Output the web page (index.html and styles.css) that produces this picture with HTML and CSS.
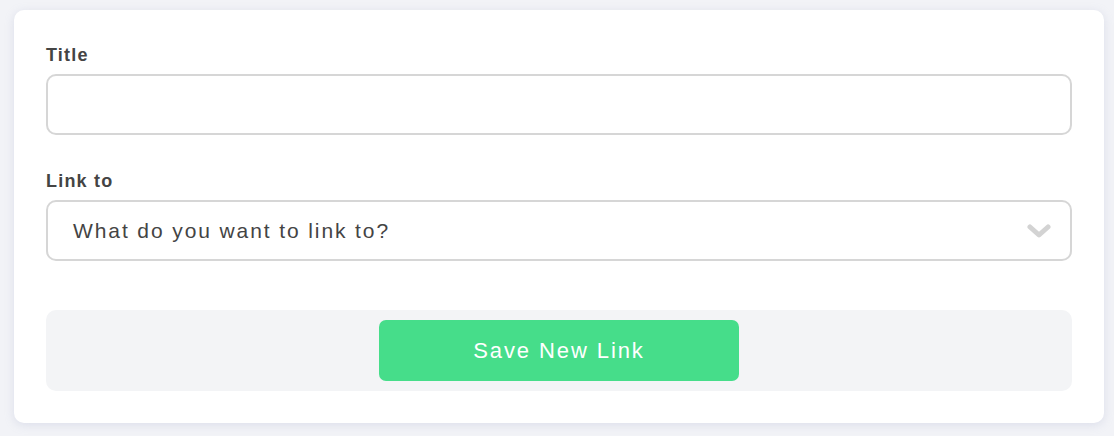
FILE: index.html
```html
<!DOCTYPE html>
<html lang="en">
<head>
<meta charset="utf-8">
<title>New Link</title>
<link rel="stylesheet" href="styles.css">
</head>
<body>
<div class="page">
  <form class="card">
    <div class="group">
      <label class="label" for="title">Title</label>
      <input class="field" id="title" type="text">
    </div>
    <div class="group">
      <label class="label" for="link">Link to</label>
      <div class="select">
        <span class="select-text">What do you want to link to?</span>
        <svg class="chevron" width="24" height="16" viewBox="0 0 24 16" aria-hidden="true">
          <path d="M3 4 L12 12 L21 4" fill="none" stroke="#d3d3d3" stroke-width="5" stroke-linecap="round" stroke-linejoin="round"/>
        </svg>
      </div>
    </div>
    <div class="footer">
      <button class="btn" type="button">Save New Link</button>
    </div>
  </form>
</div>
</body>
</html>
```
FILE: styles.css
```css
* { box-sizing: border-box; }
html, body { margin: 0; padding: 0; }
body {
  background: #f2f3f7;
  font-family: "Liberation Sans", Arial, sans-serif;
  color: #444;
}
.page {
  padding: 10px 10px 13px 14px;
}
.card {
  background: #fff;
  border-radius: 10px;
  padding: 32px;
  box-shadow: 0 2px 10px rgba(160, 168, 200, 0.28);
  display: flex;
  flex-direction: column;
}
.group {
  display: flex;
  flex-direction: column;
  gap: 9px;
  margin-bottom: 33px;
}
.group + .group { margin-bottom: 49px; }
.label {
  font-size: 18px;
  line-height: 20px;
  padding-top: 3px;
  font-weight: bold;
  letter-spacing: 1.2px;
  color: #444;
}
.field {
  height: 61px;
  border: 2px solid #d6d6d6;
  border-radius: 10px;
  background: #fff;
  font: inherit;
  outline: none;
  padding: 0 24px;
}
.select {
  height: 61px;
  border: 2px solid #d6d6d6;
  border-radius: 10px;
  display: flex;
  align-items: center;
  justify-content: space-between;
  padding: 0 19px 0 25px;
}
.select-text {
  font-size: 21px;
  letter-spacing: 1.9px;
  color: #444;
}
.chevron { display: block; }
.footer {
  background: #f3f4f6;
  border-radius: 10px;
  padding: 10px;
  display: flex;
  justify-content: center;
}
.btn {
  width: 360px;
  height: 61px;
  border: none;
  border-radius: 7px;
  background: #46dd8a;
  color: #fff;
  font-family: "Liberation Sans", Arial, sans-serif;
  font-size: 22px;
  letter-spacing: 1.9px;
  cursor: pointer;
}
```
